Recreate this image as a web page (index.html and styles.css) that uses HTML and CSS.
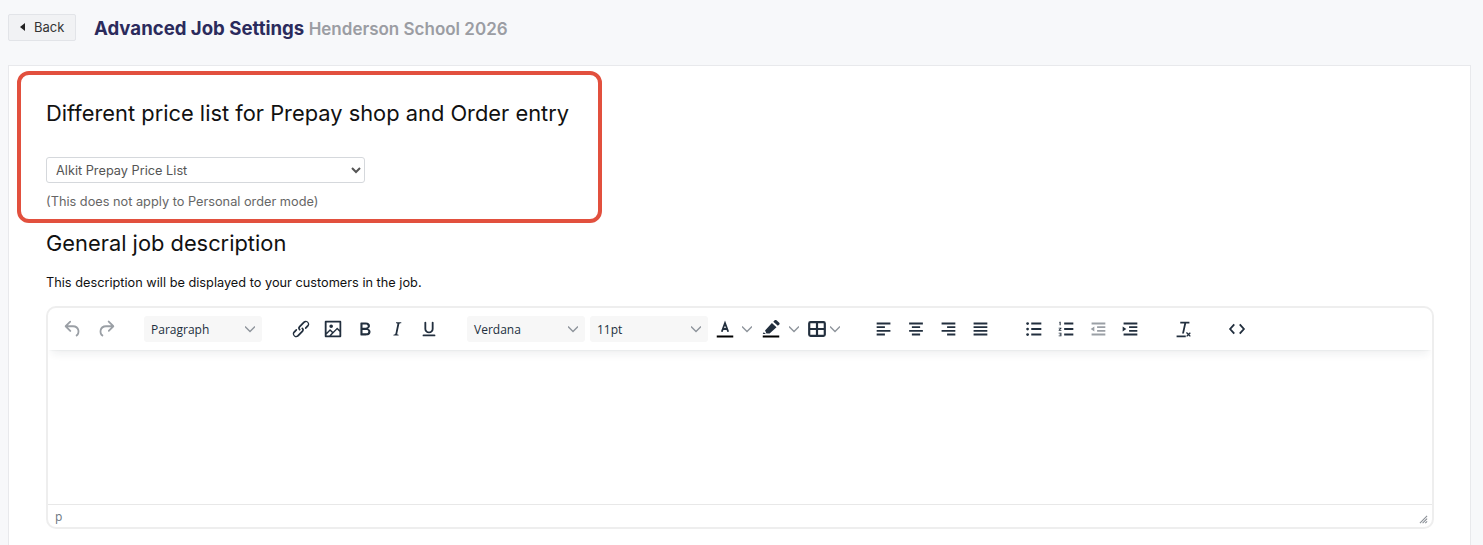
FILE: index.html
```html
<!DOCTYPE html>
<html lang="en">
<head>
<meta charset="utf-8">
<title>Advanced Job Settings</title>
<link rel="stylesheet" href="styles.css">
</head>
<body>
<header class="page-head">
  <button class="back" type="button"><span class="back-arrow"></span>Back</button>
  <h1 class="title">Advanced Job Settings <small class="subtitle">Henderson School 2026</small></h1>
</header>
<main class="card">
  <section class="callout">
    <h2 class="heading">Different price list for Prepay shop and Order entry</h2>
    <select class="price-select"><option>Alkit Prepay Price List</option></select>
    <p class="note">(This does not apply to Personal order mode)</p>
  </section>
  <section class="general">
    <h2 class="heading">General job description</h2>
    <p class="lead">This description will be displayed to your customers in the job.</p>
    <div class="editor">
      <div class="toolbar">
        <div class="group history">
          <span class="btn off"><svg class="ic" viewBox="0 0 24 24"><path d="M6.4 8H12c3.7 0 6.2 2 6.8 5.1.6 2.7-.4 5.6-2.3 6.8a1 1 0 0 1-1-1.8c1.1-.6 1.8-2.7 1.4-4.6-.5-2.1-2.1-3.5-4.9-3.5H6.4l3.3 3.3a1 1 0 1 1-1.4 1.4l-5-5a1 1 0 0 1 0-1.4l5-5a1 1 0 0 1 1.4 1.4L6.4 8Z"/></svg></span>
          <span class="btn off"><svg class="ic" viewBox="0 0 24 24"><path d="M17.6 10H12c-2.8 0-4.4 1.4-4.9 3.5-.4 2 .3 4 1.4 4.6a1 1 0 1 1-1 1.8c-2-1.2-2.9-4.1-2.3-6.8.6-3 3-5.1 6.8-5.1h5.6l-3.3-3.3a1 1 0 1 1 1.4-1.4l5 5a1 1 0 0 1 0 1.4l-5 5a1 1 0 0 1-1.4-1.4l3.3-3.3Z"/></svg></span>
        </div>
        <div class="group">
          <span class="drop">Paragraph<svg class="chev" viewBox="0 0 10 10"><path d="M0 2.5 5 7.5 10 2.5"/></svg></span>
        </div>
        <div class="group format">
          <span class="btn"><svg class="ic" viewBox="0 0 24 24"><path d="M6.2 12.3a1 1 0 0 1 1.4 1.4l-2 2a2 2 0 1 0 2.6 2.8l4.8-4.8a1 1 0 0 0 0-1.4 1 1 0 1 1 1.4-1.3 2.9 2.9 0 0 1 0 4L9.6 20a3.9 3.9 0 0 1-5.5-5.5l2-2Zm11.6-.6a1 1 0 0 1-1.4-1.4l2-2a2 2 0 1 0-2.6-2.8L11 10.3a1 1 0 0 0 0 1.4A1 1 0 1 1 9.6 13a2.9 2.9 0 0 1 0-4L14.4 4a3.9 3.9 0 0 1 5.5 5.5l-2 2Z"/></svg></span>
          <span class="btn"><svg class="ic" viewBox="0 0 24 24"><path fill-rule="evenodd" d="M4 3h16c.6 0 1 .4 1 1v16c0 .6-.4 1-1 1H4a1 1 0 0 1-1-1V4c0-.6.4-1 1-1Zm1 2v10.7l3.3-3.2c.3-.3.7-.3 1 0L12 15l4.1-4c.3-.4.8-.4 1 0l2 1.9V5H5Zm5 6a2 2 0 1 0 0-4 2 2 0 0 0 0 4Zm-5 6.9V19h3l2.8-2.9-2-2L5 17.9Zm14-3-2.5-2.3-6.4 6.4H19v-4.1Z"/></svg></span>
          <span class="btn"><svg class="ic" viewBox="0 0 24 24"><path fill-rule="evenodd" d="M7.8 19c-.3 0-.5 0-.6-.2l-.2-.5V5.7c0-.2 0-.4.2-.5l.6-.2h5c1.5 0 2.7.3 3.5 1 .7.6 1.1 1.4 1.1 2.5a3 3 0 0 1-.6 1.9c-.4.6-1 1-1.6 1.2.4.1.9.3 1.3.6s.8.7 1 1.2c.4.4.5 1 .5 1.6 0 1.3-.4 2.3-1.3 3-.8.7-2.1 1-3.8 1H7.8Zm5-8.3c.6 0 1.2-.1 1.6-.5.4-.3.6-.7.6-1.3 0-1.1-.8-1.7-2.4-1.7H9.3v3.5h3.5Zm.5 6c.7 0 1.3-.1 1.7-.4.4-.4.6-.9.6-1.5s-.2-1-.7-1.4c-.4-.3-1-.4-2-.4H9.3v3.7h4Z"/></svg></span>
          <span class="btn"><svg class="ic" viewBox="0 0 24 24"><path d="M16.7 4.7l-.1.9h-.3c-.6 0-1 0-1.4.3-.3.3-.4.6-.5 1.1l-2.1 9.8v.6c0 .5.4.8 1.4.8h.2l-.2.8H8l.2-.8h.2c1.1 0 1.8-.5 2-1.5l2-9.8.1-.5c0-.6-.4-.8-1.4-.8h-.3l.2-.9h5.8Z"/></svg></span>
          <span class="btn"><svg class="ic" viewBox="0 0 24 24"><path d="M16 4c.6 0 1 .4 1 1v7c0 2.8-2.2 4.6-5 4.6S7 14.800 7 12V5c0-.6.4-1 1-1s1 .4 1 1v7c0 1.700 1.300 2.800 3 2.800s3-1.100 3-2.800V5c0-.6.4-1 1-1ZM6 18h12c.6 0 1 .4 1 1s-.4 1-1 1H6a1 1 0 1 1 0-2Z"/></svg></span>
        </div>
        <div class="group tight">
          <span class="drop">Verdana<svg class="chev" viewBox="0 0 10 10"><path d="M0 2.5 5 7.5 10 2.5"/></svg></span>
          <span class="drop">11pt<svg class="chev" viewBox="0 0 10 10"><path d="M0 2.5 5 7.5 10 2.5"/></svg></span>
          <span class="split split-a">
            <span class="btn"><svg class="ic" viewBox="0 0 24 24"><path class="line" d="M8.500 15 12 5.500 15.500 15M9.600 12h4.800"/><path class="bar" d="M3 19h18v2.200H3z"/></svg></span>
            <svg class="chev" viewBox="0 0 10 10"><path d="M0 2.5 5 7.500 10 2.500"/></svg>
          </span>
          <span class="split split-b">
            <span class="btn"><svg class="ic" viewBox="0 0 24 24"><path d="M5.500 13.500 13 5.500l5 4.500-7.500 7H7l-1.500-3.500Zm9-9.500 1.500-1.500c.6-.6 1.400-.6 2 0l3 2.700c.6.600.5 1.400 0 2L19.500 8.500 14.500 4ZM4 15.500l2.500 2H3l1-2Z"/><path class="bar" d="M3 19h18v2.200H3z"/></svg></span>
            <svg class="chev" viewBox="0 0 10 10"><path d="M0 2.5 5 7.500 10 2.500"/></svg>
          </span>
          <span class="split split-table">
            <svg class="ic ic-table" viewBox="0 0 24 24"><path d="M5 4.500h14a1.500 1.500 0 0 1 1.500 1.500v12a1.500 1.500 0 0 1-1.500 1.500H5A1.500 1.500 0 0 1 3.500 18V6A1.500 1.500 0 0 1 5 4.500ZM3.500 12h17M12 4.500v15"/></svg>
            <svg class="chev" viewBox="0 0 10 10"><path d="M0 2.5 5 7.500 10 2.500"/></svg>
          </span>
        </div>
        <div class="group">
          <span class="btn"><svg class="ic" viewBox="0 0 24 24"><path d="M4 5h15v2H4zM4 9h9v2H4zM4 13h15v2H4zM4 17h9v2H4z"/></svg></span>
          <span class="btn"><svg class="ic" viewBox="0 0 24 24"><path d="M4.500 5h15v2h-15zM7.500 9h9v2h-9zM4.500 13h15v2h-15zM7.500 17h9v2h-9z"/></svg></span>
          <span class="btn"><svg class="ic" viewBox="0 0 24 24"><path d="M5 5h15v2H5zM11 9h9v2h-9zM5 13h15v2H5zM11 17h9v2h-9z"/></svg></span>
          <span class="btn"><svg class="ic" viewBox="0 0 24 24"><path d="M5 5h15v2H5zM5 9h15v2H5zM5 13h15v2H5zM5 17h15v2H5z"/></svg></span>
        </div>
        <div class="group lists">
          <span class="btn"><svg class="ic" viewBox="0 0 24 24"><path d="M9 5h11v2H9zM9 11h11v2H9zM9 17h11v2H9z"/><circle cx="5" cy="6" r="1.500"/><circle cx="5" cy="12" r="1.500"/><circle cx="5" cy="18" r="1.500"/></svg></span>
          <span class="btn"><svg class="ic" viewBox="0 0 24 24"><path d="M10 5h10v2H10zM10 11h10v2H10zM10 17h10v2H10zM5 4h1.200v4H5V5H4.200zM4 10.500h3v1l-1.600 1.600H7V14H4v-1l1.600-1.600H4zM4 16h3v4H4v-.9h2v-.7H5v-.8h1v-.700H4z"/></svg></span>
          <span class="btn off"><svg class="ic" viewBox="0 0 24 24"><path d="M5 5h15v2H5zM11 9h9v2h-9zM11 13h9v2h-9zM5 17h15v2H5zM8 9.200v5.600L4 12z"/></svg></span>
          <span class="btn"><svg class="ic" viewBox="0 0 24 24"><path d="M5 5h15v2H5zM11 9h9v2h-9zM11 13h9v2h-9zM5 17h15v2H5zM4 9.200v5.600L8 12z"/></svg></span>
        </div>
        <div class="group">
          <span class="btn"><svg class="ic" viewBox="0 0 24 24"><path d="M9 4h10v2h-3.600L13 17h-2L13.400 6H9zM5 19h10v2H5zM15.500 15.500l1 0 1.500 1.500 1.500-1.500 1 1-1.500 1.500 1.500 1.500-1 1-1.500-1.500-1.500 1.500-1-1 1.500-1.500-1.500-1.500z"/></svg></span>
        </div>
        <div class="group">
          <span class="btn"><svg class="ic" viewBox="0 0 24 24"><path class="line" d="M9 7 4.500 12 9 17M15 7l4.500 5L15 17"/></svg></span>
        </div>
      </div>
      <div class="edit-area"></div>
      <div class="statusbar">
        <span class="path">p</span>
        <svg class="grip" viewBox="0 0 10 10"><path d="M9 1 1 9M9 4 4 9M9 7 7 9"/></svg>
      </div>
    </div>
  </section>
</main>
</body>
</html>
```
FILE: styles.css
```css
* { box-sizing: border-box; }
html, body { height: 545px; overflow: hidden; }
body {
  display: flex;
  flex-direction: column;
  margin: 0;
  background: #f7f8fa;
  font-family: Inter, "Liberation Sans", sans-serif;
  color: #111;
}
.page-head {
  display: flex;
  align-items: center;
  flex: none;
  height: 65px;
  padding: 0 0 10px 8px;
}
.back {
  display: flex;
  align-items: center;
  width: 68px;
  height: 27px;
  padding: 0 0 1px 11px;
  background: #f1f2f4;
  border: 1px solid #e2e4e8;
  border-radius: 2px;
  font: 13px Inter, sans-serif;
  color: #333;
}
.back-arrow {
  width: 0;
  height: 0;
  margin-right: 9px;
  border-top: 4px solid transparent;
  border-bottom: 4px solid transparent;
  border-right: 5px solid #222;
}
.title {
  margin: 0 0 0 18px;
  font-size: 18.600px;
  font-weight: 700;
  color: #2b2b5c;
}
.subtitle {
  font-size: 17px;
  font-weight: 600;
  color: #9b9da3;
}
.card {
  flex: 1;
  min-height: 0;
  margin: 0 12px 0 8px;
  background: #fff;
  border: 1px solid #e8e9ec;
  border-bottom: 0;
  padding: 5px 36px 0 8px;
}
.callout {
  width: 585px;
  height: 152px;
  border: 4px solid #e2503e;
  border-radius: 12px;
  padding: 23px 0 0 25px;
}
.heading {
  margin: 0;
  font-size: 21.850px;
  font-weight: 400;
  line-height: 30px;
  color: #111;
}
.price-select {
  display: block;
  width: 319px;
  height: 26px;
  margin-top: 29px;
  padding: 0 5px;
  background: #fff;
  border: 1px solid #d5d8dc;
  border-radius: 3px;
  font: 12.750px Inter, sans-serif;
  color: #555;
}
.note {
  margin: 11px 0 0;
  font-size: 12.750px;
  line-height: 15px;
  color: #666;
}
.general { padding: 5px 0 0 29px; }
.lead {
  margin: 17px 0 0;
  font-size: 12.750px;
  line-height: 16px;
  color: #111;
}
.editor {
  display: flex;
  flex-direction: column;
  width: 1388px;
  height: 223px;
  margin-top: 15px;
  border: 2px solid #eeeeee;
  border-radius: 10px;
  overflow: hidden;
}
.toolbar {
  display: flex;
  align-items: center;
  gap: 22px;
  height: 42px;
  padding: 0 0 0 9px;
  box-shadow: 0 2px 2px -2px rgba(34, 47, 62, .1), 0 8px 8px -4px rgba(34, 47, 62, .07);
}
.group { display: flex; align-items: center; }
.history .btn + .btn { margin-left: 1px; }
.format { margin-left: 1px; }
.lists { margin-right: -1px; }
.tight { gap: 5px; }
.btn {
  display: flex;
  align-items: center;
  justify-content: center;
  width: 32px;
  height: 26px;
}
.ic { display: block; width: 22px; height: 22px; fill: #222f3e; }
.off .ic { fill: #9a9fa5; }
.line { fill: none; stroke: #222f3e; stroke-width: 2; }
.bar { fill: #000; }
.ic-table { fill: none; stroke: #222f3e; stroke-width: 2.400; }
.drop {
  display: flex;
  align-items: center;
  justify-content: space-between;
  width: 118px;
  height: 26px;
  padding: 0 7px 0 7px;
  background: #f7f7f7;
  border-radius: 3px;
  font: 12px "Open Sans", sans-serif;
  color: #222f3e;
}
.chev { width: 10px; height: 10px; fill: none; stroke: #8f959c; stroke-width: 1.400; flex: none; }
.split { display: flex; align-items: center; }
.split-a { margin: 0 -1px 0 -4px; }
.split-a .chev { margin-left: 1px; }
.split-b { margin: 0 -3px 0 -1px; }
.split-b .chev { margin-left: 2px; }
.split-table { margin: 0 1px 0 -1px; padding: 0 5px 0 6px; }
.split-table .ic { margin-right: 2px; }
.edit-area { flex: 1; }
.statusbar {
  display: flex;
  align-items: center;
  justify-content: space-between;
  height: 23px;
  padding: 0 4px 0 7px;
  border-top: 1px solid #e8e8e8;
}
.path { font: 12px "Open Sans", sans-serif; color: #6a7480; }
.grip { width: 9px; height: 9px; margin-top: 6px; fill: none; stroke: #8a8f96; stroke-width: 1.200; }
```
